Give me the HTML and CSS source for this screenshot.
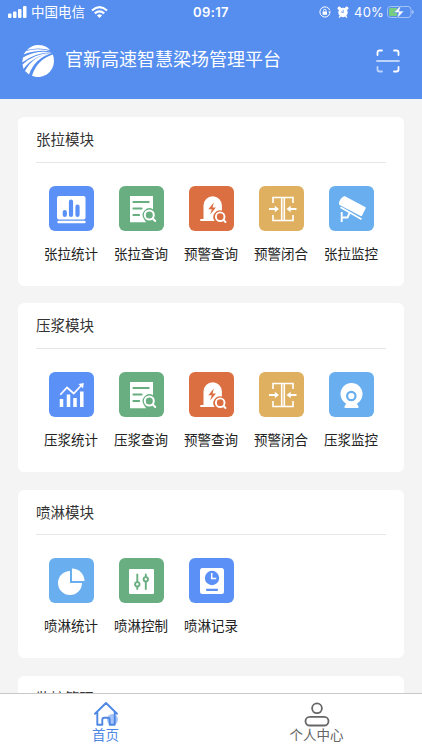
FILE: index.html
```html
<!DOCTYPE html>
<html lang="zh-CN">
<head>
  <meta charset="UTF-8" />
  <meta name="viewport" content="width=device-width, initial-scale=1.0"/>
  <title>官新高速智慧梁场管理平台</title>
  <link rel="stylesheet" href="styles.css">
</head>
<body>

  <!-- shared icons -->
  <svg class="sprite">
    <symbol id="i-search" viewBox="0 0 45 45">
      <path fill="#fff" d="M11 10h23v13.2a6.8 6.8 0 0 0-9 9.800q.8 2 2.300 3.200H11z"/>
      <path stroke="#69ae80" stroke-width="1.800" stroke-linecap="round" d="M14.300 16h15.500M14.300 22.500h8.400M14.300 29h6"/>
      <g fill="none" stroke="#fff" stroke-width="2"><circle cx="30.300" cy="29" r="4.500"/><path stroke-linecap="round" d="M33.700 32.500l2.500 2.500"/></g>
    </symbol>
    <symbol id="i-alarm" viewBox="0 0 45 45">
      <path fill="#fff" d="M11.300 35v-2h3.200V19.500a9.200 9.200 0 0 1 18.400 0v5a6.700 6.700 0 0 0-7.200 10.500z"/>
      <path fill="#dc6f42" d="M24.800 16.500l-5.500 6.800h3.500l-1.600 5.200 5.700-7h-3.300z"/>
      <g fill="none" stroke="#fff" stroke-width="1.900"><circle cx="31.200" cy="30.700" r="4.300"/><path stroke-linecap="round" d="M34.500 34l2 2"/></g>
    </symbol>
    <symbol id="i-close" viewBox="0 0 45 45">
      <g fill="none" stroke="#fff" stroke-width="1.600">
        <path d="M14 17v-5.500h20V17M14 29v5.500h20V29M22.700 11.500v23M25.300 11.500v23"/>
        <path stroke-width="1.900" d="M10 23h7M37.500 23h-7"/>
      </g>
      <path fill="#fff" d="M15.800 19.700l4.200 3.300-4.200 3.300zM31.700 19.700L27.500 23l4.200 3.300z"/>
    </symbol>
  </svg>

  <header class="header">
    <div class="status">
      <div class="status-left">
        <svg width="19" height="12" viewBox="0 0 19 12" fill="#fff"><rect y="7.500" width="3.500" height="4.500" rx="1"/><rect x="5" y="5.500" width="3.500" height="6.500" rx="1"/><rect x="10" y="3" width="3.500" height="9" rx="1"/><rect x="15" width="3.500" height="12" rx="1"/></svg>
        <span class="carrier">中国电信</span>
        <svg width="17" height="12" viewBox="0 0 17 12"><g fill="none" stroke="#fff" stroke-width="2.200"><path d="M1 4.500Q8.500-2.200 16 4.500"/><path d="M3.800 7.300q4.700-4 9.400 0"/></g><path fill="#fff" d="M5.900 9.400q2.600-2.200 5.200 0L8.500 12z"/></svg>
      </div>
      <div class="time">09:17</div>
      <div class="status-right">
        <svg width="12" height="12" viewBox="0 0 12 12" fill="none" stroke="#fff"><path d="M10.800 4.300a5.100 5.100 0 1 0 .1 3"/><path d="M9.200 5.500h2.700l-1.200 1.900z" fill="#fff" stroke="none"/><path d="M3.600 5.500h4.400v3.300H3.600z" fill="#fff" stroke="none"/><path d="M4.600 5.600V4.500a1.200 1.200 0 0 1 2.400 0v1.100" stroke-width=".9"/></svg>
        <svg class="clock" width="12" height="12" viewBox="0 0 12 12"><g fill="#fff"><circle cx="6" cy="6.500" r="4.700"/><circle cx="2.300" cy="2.200" r="1.700"/><circle cx="9.700" cy="2.200" r="1.700"/></g><path d="M2 11.500l1.500-1.500M10 11.500L8.500 10" stroke="#fff" stroke-width="1.300"/><path d="M6.200 3.700v3L4 5.700" fill="none" stroke="#568eef" stroke-width=".8"/></svg>
        <span class="percent">40%</span>
        <svg width="27" height="14" viewBox="0 0 27 14"><rect x=".5" y="1.500" width="23.500" height="11" rx="3" fill="none" stroke="#a5c2f5"/><path d="M25 5v4q1.800-.5 1.800-2T25 5z" fill="#a5c2f5"/><path d="M3.500 3H10v8H3.500Q2 11 2 9.500v-5Q2 3 3.500 3z" fill="#76cd80"/><path d="M14 .2L6.800 7.600h4.700l-1.400 6L17 6.100h-4.600z" fill="#fff" stroke="#568eef" stroke-width=".6"/></svg>
      </div>
    </div>
    <div class="brand">
      <svg class="logo" width="32" height="32" viewBox="0 0 32 32">
        <path fill="#fff" d="M5 5Q10 0 16 0q8 0 12 5Q16 1.800 5 5z"/>
        <path fill="#fff" d="M1.500 9.500L4 6q12-3.700 25 .3Q14 4.500 1.500 9.500z"/>
        <path fill="#fff" d="M.2 17.500L1 12.500Q13 5 30 7.200 12 7.800.2 17.500z"/>
        <path fill="#fff" d="M1.500 24L.5 19.500Q12 8.500 30 7.700 10 11.500 1.500 24z"/>
        <path fill="#fff" d="M7 29.500L3 26Q11 10.500 30 8 13 13 7 29.500z"/>
        <path fill="#fff" d="M10 30.800Q15 14.500 30.800 9.500 32 12 32 16a16 16 0 0 1-22 14.800z"/>
      </svg>
      <h1>官新高速智慧梁场管理平台</h1>
      <svg class="scan" width="24" height="24" viewBox="0 0 24 24" fill="none" stroke="#fff" stroke-width="1.800" stroke-linecap="round"><path d="M1.500 6V3.500q0-2 2-2H6M18 1.500h2.500q2 0 2 2V6M22.500 18v2.500q0 2-2 2H18"/><path d="M6 22.500H3.500q-2 0-2-2V18M1 12h22" stroke="#bdd4fc"/></svg>
    </div>
  </header>

  <main class="content">
    <section class="card">
      <h2>张拉模块</h2>
      <div class="grid">
        <div class="item">
          <svg class="icon blue" viewBox="0 0 45 45"><rect x="8" y="10" width="28.500" height="23.500" rx="2" fill="#fff"/><path d="M9.500 36h26" stroke="#fff" stroke-width="2.400" stroke-linecap="round"/><path d="M15.800 29v-3M22 29V15.500M28.500 29v-8.500" stroke="#5b91f7" stroke-width="4.200" stroke-linecap="round"/></svg>
          <span>张拉统计</span>
        </div>
        <div class="item"><svg class="icon green"><use href="#i-search"/></svg><span>张拉查询</span></div>
        <div class="item"><svg class="icon orange"><use href="#i-alarm"/></svg><span>预警查询</span></div>
        <div class="item"><svg class="icon yellow"><use href="#i-close"/></svg><span>预警闭合</span></div>
        <div class="item">
          <svg class="icon sky" viewBox="0 0 45 45"><path fill="#fff" stroke="#fff" stroke-width="2" stroke-linejoin="round" d="M15.500 11.200L35.700 22l-3.500 7L11 18q0-4.500 4.500-6.800z"/><path fill="none" stroke="#fff" stroke-width="1.800" d="M11.500 21.200l21 12"/><path fill="none" stroke="#fff" stroke-width="1.900" d="M12.700 26v10M13 31.500h5.500l2-4.500"/></svg>
          <span>张拉监控</span>
        </div>
      </div>
    </section>

    <section class="card">
      <h2>压浆模块</h2>
      <div class="grid">
        <div class="item">
          <svg class="icon blue" viewBox="0 0 45 45"><path stroke="#fff" stroke-width="3.500" d="M12.500 35v-8M19.500 35V22.500M26 35v-9M32.800 35V19.500"/><path fill="none" stroke="#fff" stroke-width="1.700" d="M11.300 22.800l6.700-7.300 6.700 6 8-8.500"/><path fill="#fff" d="M29.500 12l5.300-1-.8 5.600z"/></svg>
          <span>压浆统计</span>
        </div>
        <div class="item"><svg class="icon green"><use href="#i-search"/></svg><span>压浆查询</span></div>
        <div class="item"><svg class="icon orange"><use href="#i-alarm"/></svg><span>预警查询</span></div>
        <div class="item"><svg class="icon yellow"><use href="#i-close"/></svg><span>预警闭合</span></div>
        <div class="item">
          <svg class="icon sky" viewBox="0 0 45 45"><circle cx="22.500" cy="22" r="11" fill="#fff"/><path fill="#fff" d="M17.500 31h10l2 3.500q.5 1.500-1 1.500h-12q-1.500 0-1-1.500z"/><circle cx="22.300" cy="24" r="4.200" fill="none" stroke="#69aeee" stroke-width="2.200"/></svg>
          <span>压浆监控</span>
        </div>
      </div>
    </section>

    <section class="card">
      <h2>喷淋模块</h2>
      <div class="grid">
        <div class="item">
          <svg class="icon sky" viewBox="0 0 45 45"><path fill="#fff" d="M21 13v12h12a12 12 0 1 1-12-12z"/><path fill="#fff" d="M23 10.500a12.500 12.500 0 0 1 12.500 12.500H23z"/></svg>
          <span>喷淋统计</span>
        </div>
        <div class="item">
          <svg class="icon green" viewBox="0 0 45 45"><rect x="10" y="11" width="25" height="25" rx="1" fill="#fff"/><g stroke="#69ae80" stroke-width="1.900" stroke-linecap="round"><path d="M18.300 16.500v14.500M26.800 16.500v14.500"/><circle cx="18.300" cy="26.300" r="2.200" fill="#fff"/><circle cx="26.800" cy="21.300" r="2.200" fill="#fff"/></g></svg>
          <span>喷淋控制</span>
        </div>
        <div class="item">
          <svg class="icon blue" viewBox="0 0 45 45"><rect x="11" y="10" width="24" height="26" rx="2.500" fill="#fff"/><circle cx="23" cy="20" r="7.200" fill="#5b91f7"/><path d="M22.700 15v5.500h4.500" fill="none" stroke="#fff" stroke-width="1.500"/><path d="M18 31.800h10" stroke="#5b91f7" stroke-width="2.300" stroke-linecap="round"/></svg>
          <span>喷淋记录</span>
        </div>
      </div>
    </section>

    <section class="card">
      <h2>监控管理</h2>
    </section>
  </main>

  <nav class="tabbar">
    <div class="tab active">
      <svg width="26" height="26" viewBox="0 0 26 26"><circle cx="19.500" cy="18.500" r="5.500" fill="#a5c4f8"/><path d="M2 12.800L13 2l11 10.800M4.300 11v12.700h5v-5q0-2 2-2h3.400q2 0 2 2v5h5V11" fill="none" stroke="#4f87e4" stroke-width="1.900" stroke-linecap="round" stroke-linejoin="round"/></svg>
      <span>首页</span>
    </div>
    <div class="tab">
      <svg width="26" height="26" viewBox="0 0 26 26" fill="none" stroke="#666" stroke-width="1.800"><circle cx="13" cy="7.300" r="4.900"/><rect x="1.500" y="15.800" width="23" height="8.700" rx="4.300"/></svg>
      <span>个人中心</span>
    </div>
  </nav>

</body>
</html>
```
FILE: styles.css
```css
body {
  margin: 0;
  height: 100vh;
  display: flex;
  flex-direction: column;
  overflow: hidden;
  background: #f4f4f4;
  font-family: "Noto Sans CJK SC", sans-serif;
  color: #222;
}

svg {
  display: block;
  flex: none;
}

.sprite {
  position: absolute;
  width: 0;
  height: 0;
}

.header {
  flex: none;
  height: 99px;
  background: #568eef;
  color: #fff;
}

.status {
  display: grid;
  grid-template-columns: 1fr auto 1fr;
  align-items: center;
  height: 24px;
  padding: 0 8px 0 8px;
}

.status-left,
.status-right {
  display: flex;
  align-items: center;
}

.status-right {
  justify-content: flex-end;
}

.carrier {
  margin: 0 6px 2px 4px;
  font-size: 13.500px;
  line-height: 20px;
}

.time {
  font-family: Inter, sans-serif;
  font-size: 13px;
  font-weight: 600;
  letter-spacing: 0.400px;
}

.clock {
  margin-left: 6px;
}

.percent {
  margin: 0 3px 0 5px;
  font-family: Inter, sans-serif;
  font-size: 13px;
  letter-spacing: 0.200px;
}

.brand {
  display: flex;
  align-items: center;
  height: 74px;
  padding: 0 22px;
}

.logo {
  margin-right: 11px;
}

h1 {
  flex: 1;
  margin: 0;
  padding-bottom: 7px;
  font-size: 18px;
  font-weight: 400;
  line-height: 24px;
}

.content {
  flex: 1;
  min-height: 0;
  overflow: hidden;
  padding: 18px 18px 0;
}

.card {
  height: 168.600px;
  margin-bottom: 17.700px;
  padding: 0 18px;
  box-sizing: border-box;
  border-radius: 6px;
  background: #fff;
}

h2 {
  margin: 0;
  height: 44.500px;
  border-bottom: 1px solid #e6e6e6;
  font-size: 14.500px;
  font-weight: 400;
  line-height: 43px;
  color: #333;
}

.grid {
  display: grid;
  grid-template-columns: repeat(5, 70px);
  padding-top: 23px;
}

.item {
  display: flex;
  flex-direction: column;
  align-items: center;
  font-size: 13.500px;
  line-height: 20px;
}

.item span {
  margin-top: 12px;
}

.icon {
  width: 45px;
  height: 45px;
  border-radius: 6px;
}

.blue { background: #5b91f7; }
.green { background: #69ae80; }
.orange { background: #dc6f42; }
.yellow { background: #dfb060; }
.sky { background: #69aeee; }

.tabbar {
  flex: none;
  display: flex;
  height: 56px;
  border-top: 1px solid #c8c8c8;
  background: #fff;
}

.tab {
  flex: 1;
  display: flex;
  flex-direction: column;
  align-items: center;
  padding-top: 7px;
  font-size: 13.500px;
  font-weight: 400;
  line-height: 14px;
  color: #666;
}

.tab.active {
  color: #4f87e4;
}
```
